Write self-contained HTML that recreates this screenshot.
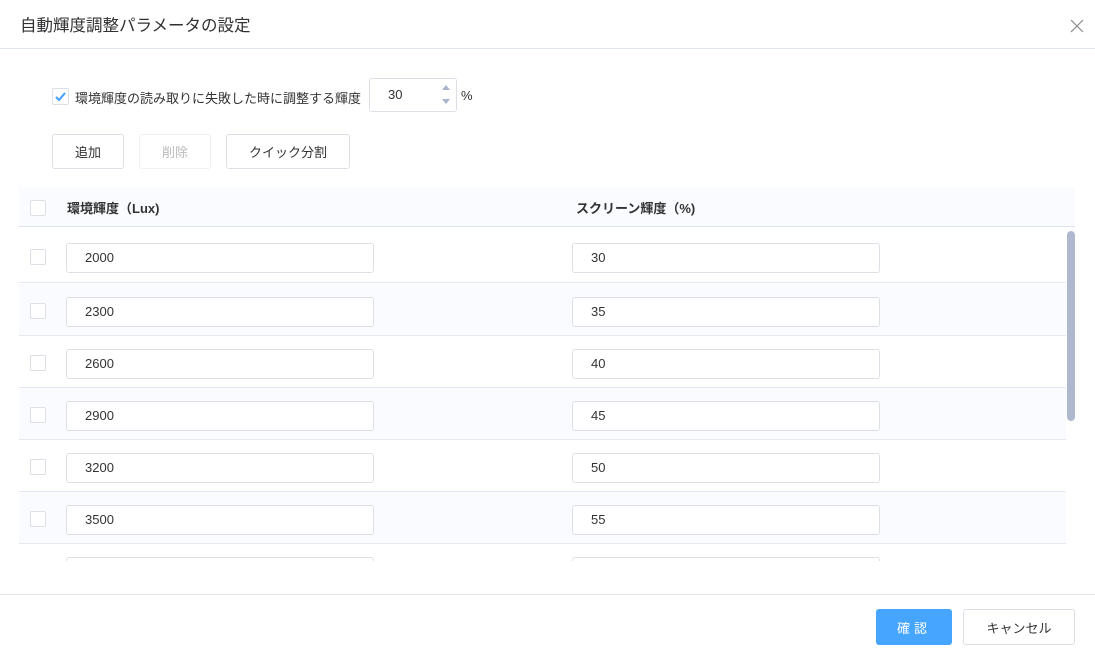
<!DOCTYPE html>
<html><head><meta charset="utf-8"><style>
*{box-sizing:border-box;margin:0;padding:0}
body{width:1095px;height:655px;background:#fff;font-family:"Liberation Sans","Noto Sans CJK JP",sans-serif;color:#333;position:relative;overflow:hidden;font-size:13px}
.abs{position:absolute}
.title{left:20px;top:12px;font-size:16.5px;color:#303133}
.hline{left:0;width:1095px;height:1px;background:#dfe5f0}
.cb{width:16px;height:16px;border:1px solid #dcdfe6;border-radius:2px;background:#fff}
.btn{border:1px solid #dcdfe6;border-radius:3px;background:#fff;display:flex;align-items:center;justify-content:center;font-size:13px;color:#333}
.inp{border:1px solid #dcdfe6;border-radius:3px;height:30px;width:308px;padding-left:18px;line-height:28px;font-size:13px;color:#333;background:#fff}
.row{left:19px;width:1047px;height:52px;border-bottom:1px solid #e4e8f0}
</style></head><body>
<div class="abs title">自動輝度調整パラメータの設定</div>
<svg class="abs" style="left:1070px;top:19px" width="14" height="14" viewBox="0 0 14 14"><path d="M1 1L13 13M13 1L1 13" stroke="#888" stroke-width="1.2"/></svg>
<div class="abs hline" style="top:48px"></div>

<div class="abs cb" style="left:52px;top:88px;width:17px;height:17px"><svg width="15" height="15" viewBox="0 0 15 15"><path d="M3 8L6 11L12 4" stroke="#409eff" stroke-width="2" fill="none"/></svg></div>
<div class="abs" style="left:75px;top:88px;font-size:13px;color:#333">環境輝度の読み取りに失敗した時に調整する輝度</div>
<div class="abs" style="left:369px;top:78px;width:88px;height:34px;border:1px solid #dcdfe6;border-radius:3px;padding-left:18px;line-height:32px">30</div>
<svg class="abs" style="left:441px;top:84px" width="10" height="22"><path d="M1 6L5 1L9 6Z" fill="#a8b3cc"/><path d="M1 15L5 20L9 15Z" fill="#a8b3cc"/></svg>
<div class="abs" style="left:461px;top:88px">%</div>

<div class="abs btn" style="left:52px;top:134px;width:72px;height:35px">追加</div>
<div class="abs btn" style="left:139px;top:134px;width:72px;height:35px;color:#bbb;border-color:#eef0f4">削除</div>
<div class="abs btn" style="left:226px;top:134px;width:124px;height:35px">クイック分割</div>

<div class="abs" style="left:19px;top:187px;width:1056px;height:40px;background:#f9fbfe;border-bottom:1px solid #dfe5f0"></div>
<div class="abs cb" style="left:30px;top:200px"></div>
<div class="abs" style="left:67px;top:198px;font-weight:bold;color:#333">環境輝度（Lux)</div>
<div class="abs" style="left:576px;top:198px;font-weight:bold;color:#333">スクリーン輝度（%)</div>

<div class="abs" style="left:0;top:231px;width:1095px;height:330px;overflow:hidden">
<div class="abs row" style="top:0"></div>
<div class="abs row" style="top:53px;background:#f9fbfe"></div>
<div class="abs row" style="top:105px"></div>
<div class="abs row" style="top:157px;background:#f9fbfe"></div>
<div class="abs row" style="top:209px"></div>
<div class="abs row" style="top:261px;background:#f9fbfe"></div>
<div class="abs cb" style="left:30px;top:18px"></div><div class="abs inp" style="left:66px;top:12px">2000</div><div class="abs inp" style="left:572px;top:12px">30</div>
<div class="abs cb" style="left:30px;top:72px"></div><div class="abs inp" style="left:66px;top:66px">2300</div><div class="abs inp" style="left:572px;top:66px">35</div>
<div class="abs cb" style="left:30px;top:124px"></div><div class="abs inp" style="left:66px;top:118px">2600</div><div class="abs inp" style="left:572px;top:118px">40</div>
<div class="abs cb" style="left:30px;top:176px"></div><div class="abs inp" style="left:66px;top:170px">2900</div><div class="abs inp" style="left:572px;top:170px">45</div>
<div class="abs cb" style="left:30px;top:228px"></div><div class="abs inp" style="left:66px;top:222px">3200</div><div class="abs inp" style="left:572px;top:222px">50</div>
<div class="abs cb" style="left:30px;top:280px"></div><div class="abs inp" style="left:66px;top:274px">3500</div><div class="abs inp" style="left:572px;top:274px">55</div>
<div class="abs inp" style="left:66px;top:326px"></div><div class="abs inp" style="left:572px;top:326px"></div>
<div class="abs" style="left:1067px;top:0;width:8px;height:190px;border-radius:4px;background:#b0b8d0"></div>
</div>

<div class="abs hline" style="top:594px"></div>
<div class="abs btn" style="left:876px;top:609px;width:76px;height:36px;background:#46a6ff;border-color:#46a6ff;color:#fff;letter-spacing:4px">確認</div>
<div class="abs btn" style="left:963px;top:609px;width:112px;height:36px">キャンセル</div>
</body></html>
